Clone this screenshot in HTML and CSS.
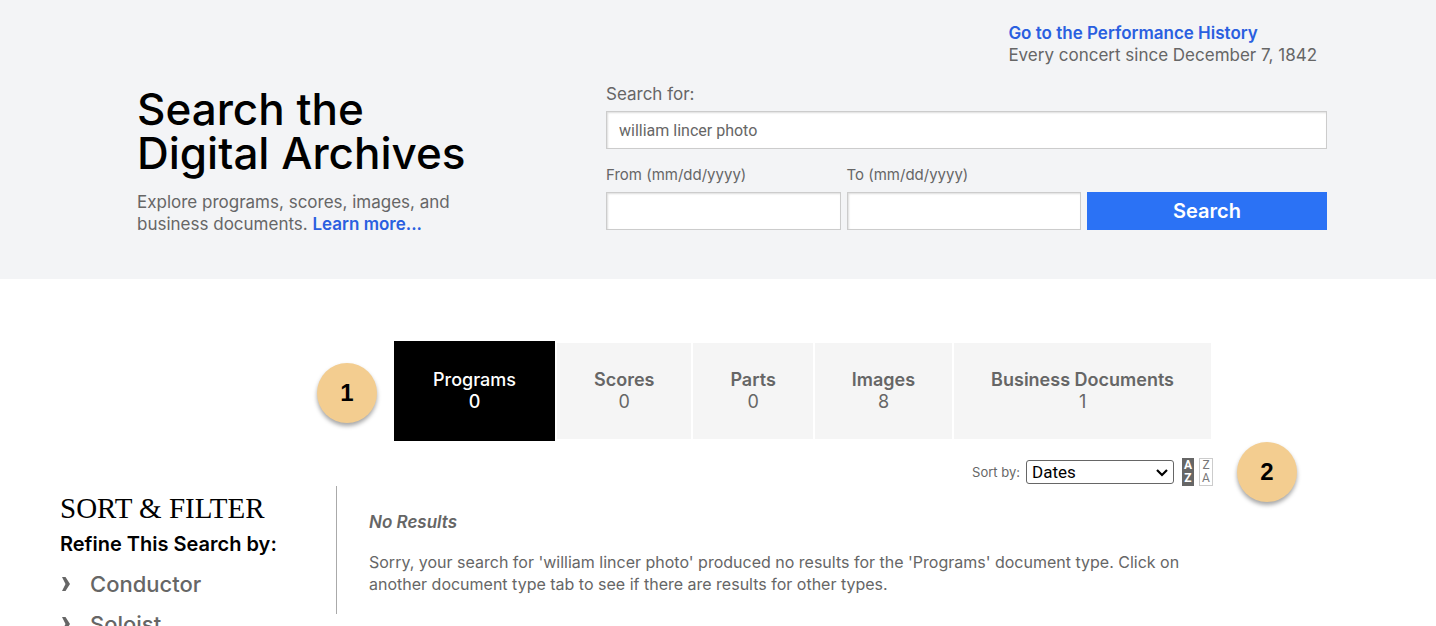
FILE: index.html
```html
<!DOCTYPE html>
<html lang="en">
<head>
    <meta charset="UTF-8">
    <meta name="viewport" content="width=device-width, initial-scale=1.0">
    <link rel="stylesheet" href="styles.css">
    <title>Search the Digital Archives</title>
</head>
<body>
    <header class="search-header">
        <div class="intro">
            <h1>Search the<br>Digital Archives</h1>
            <p>Explore programs, scores, images, and<br>business documents. <a href="#">Learn more...</a></p>
        </div>
        <div class="search-area">
            <div class="history">
                <div class="history-text">
                    <a href="#">Go to the Performance History</a><br>
                    Every concert since December 7, 1842
                </div>
            </div>
            <form class="search-form">
                <div class="field field-wide">
                    <label class="label-large" for="query">Search for:</label>
                    <input type="text" id="query" value="william lincer photo">
                </div>
                <div class="field">
                    <label for="from">From (mm/dd/yyyy)</label>
                    <input type="text" id="from">
                </div>
                <div class="field">
                    <label for="to">To (mm/dd/yyyy)</label>
                    <input type="text" id="to">
                </div>
                <button type="submit" class="search-button">Search</button>
            </form>
        </div>
    </header>

    <main>
        <div class="tabs">
            <span class="badge badge-tabs">1</span>
            <button type="button" class="tab active"><b>Programs</b><span>0</span></button>
            <button type="button" class="tab"><b>Scores</b><span>0</span></button>
            <button type="button" class="tab"><b>Parts</b><span>0</span></button>
            <button type="button" class="tab"><b>Images</b><span>8</span></button>
            <button type="button" class="tab"><b>Business Documents</b><span>1</span></button>
        </div>

        <div class="sort-row">
            <div class="sort">
                <label for="sort">Sort by:</label>
                <div class="select-box">
                    <select id="sort">
                        <option>Dates</option>
                    </select>
                    <svg class="arrow" width="12" height="8" viewBox="0 0 12 8"><path d="M1 1l5 5 5-5" fill="none" stroke="#000" stroke-width="2.200"/></svg>
                </div>
                <button type="button" class="order selected"><span>A</span><span>Z</span></button>
                <button type="button" class="order"><span>Z</span><span>A</span></button>
                <span class="badge badge-sort">2</span>
            </div>
        </div>

        <div class="columns">
            <aside class="sidebar">
                <h2>SORT &amp; FILTER</h2>
                <h3>Refine This Search by:</h3>
                <ul class="filters">
                    <li><a href="#"><svg width="8" height="14" viewBox="0 0 8 14"><path d="M0 0h3.500L8 7l-4.500 7H0l3.500-7z" fill="#666"/></svg>Conductor</a></li>
                    <li><a href="#"><svg width="8" height="14" viewBox="0 0 8 14"><path d="M0 0h3.500L8 7l-4.500 7H0l3.500-7z" fill="#666"/></svg>Soloist</a></li>
                </ul>
            </aside>
            <section class="results">
                <h4>No Results</h4>
                <p>Sorry, your search for 'william lincer photo' produced no results for the 'Programs' document type. Click on another document type tab to see if there are results for other types.</p>
            </section>
        </div>
    </main>
</body>
</html>
```
FILE: styles.css
```css
* {
    box-sizing: border-box;
}

body {
    font-family: Inter, "Liberation Sans", sans-serif;
    font-size: 17px;
    line-height: 22px;
    color: #666;
    background-color: #fff;
    margin: 0;
    height: 100vh;
    overflow: hidden;
}

a {
    color: #2a5fe0;
    font-weight: 600;
    text-decoration: none;
}

h1, h2, h3, h4, p {
    margin: 0;
}

button, input, select {
    font-family: inherit;
}

.search-header {
    display: grid;
    grid-template-columns: 469px 1fr;
    background-color: #f3f4f6;
    padding: 22px 109px 44px 137px;
}

.intro {
    padding-top: 65px;
}

h1 {
    font-size: 44px;
    line-height: 44px;
    font-weight: 500;
    color: #000;
    margin-bottom: 16px;
}

.history {
    display: flex;
    justify-content: flex-end;
    padding-right: 10px;
    margin-bottom: 17px;
}

.search-form {
    display: grid;
    grid-template-columns: 1fr 1fr 240px;
    column-gap: 6px;
    row-gap: 15px;
    align-items: end;
}

.field-wide {
    grid-column: 1 / 4;
}

.field {
    font-size: 15px;
}

.field label {
    display: block;
    margin-bottom: 6px;
}

.field .label-large {
    font-size: 17px;
}

.field input {
    display: block;
    width: 100%;
    height: 38px;
    padding: 0 12px;
    border: 1px solid #ccc;
    box-shadow: inset 1px 1px 2px #ddd;
    background-color: #fff;
    color: #666;
    font-family: Roboto, sans-serif;
    font-size: 16px;
}

.search-button {
    height: 38px;
    border: none;
    background-color: #2b72f5;
    color: #fff;
    font-size: 20px;
    font-weight: 600;
}

.tabs {
    position: relative;
    display: flex;
    align-items: center;
    gap: 2px;
    width: fit-content;
    margin: 62px 0 0 394px;
}

.tab {
    display: flex;
    flex-direction: column;
    align-items: center;
    justify-content: center;
    height: 96px;
    padding: 0 37px;
    border: none;
    background-color: #f5f5f5;
    color: #666;
    font-size: 18px;
    line-height: 22px;
}

.tab b {
    font-weight: 600;
}

.tab.active {
    height: 100px;
    padding: 0 39px;
    background-color: #000;
    color: #fff;
}

.tab.active b,
.tab.active span {
    font-weight: 500;
}

.badge {
    position: absolute;
    display: flex;
    align-items: center;
    justify-content: center;
    width: 60px;
    height: 60px;
    border-radius: 50%;
    background-color: #f3cd90;
    box-shadow: 0 3px 4px rgba(0, 0, 0, 0.35);
    color: #000;
    font-family: "Liberation Sans", sans-serif;
    font-size: 24px;
    font-weight: bold;
}

.badge-tabs {
    top: 22px;
    left: -77px;
}

.badge-sort {
    top: -16px;
    right: -84px;
}

.sort-row {
    display: flex;
    justify-content: flex-end;
    padding-right: 223px;
    margin-top: 17px;
}

.sort {
    position: relative;
    display: flex;
    align-items: center;
    height: 28px;
    font-size: 13px;
}

.select-box {
    position: relative;
    margin: 0 8px 0 6px;
}

.sort select {
    display: block;
    appearance: none;
    width: 148px;
    height: 24px;
    padding: 0 5px;
    border: 1px solid #666;
    border-radius: 3px;
    background-color: #fff;
    color: #000;
    font-family: Roboto, sans-serif;
    font-size: 17px;
}

.arrow {
    position: absolute;
    top: 9px;
    right: 6px;
    pointer-events: none;
}

.order {
    display: flex;
    flex-direction: column;
    align-items: center;
    width: 14px;
    padding: 0;
    border: 1px solid #ccc;
    background-color: #fff;
    color: #777;
    font-family: Roboto, sans-serif;
    font-size: 12px;
    line-height: 13px;
}

.order.selected {
    width: 12px;
    margin-right: 5px;
    border-color: #666;
    background-color: #666;
    color: #fff;
    font-weight: bold;
}

.columns {
    display: grid;
    grid-template-columns: 276px 1fr;
    align-items: start;
    padding: 0 250px 0 60px;
}

.sidebar h2 {
    font-family: "Liberation Serif", serif;
    font-size: 29px;
    line-height: 36px;
    font-weight: normal;
    color: #000;
    margin-top: 4px;
}

.sidebar h3 {
    font-size: 20px;
    line-height: 24px;
    font-weight: 600;
    color: #000;
    margin-top: 6px;
}

.filters {
    list-style: none;
    margin: 14px 0 0;
    padding: 0;
}

.filters li {
    height: 40px;
}

.filters a {
    display: flex;
    align-items: center;
    gap: 20px;
    padding-left: 2px;
    color: #666;
    font-size: 22px;
    line-height: 28px;
    font-weight: 500;
}

.results {
    min-height: 128px;
    padding: 25px 0 0 32px;
    border-left: 1px solid #aaa;
    font-size: 16px;
}

.results h4 {
    font-size: 17px;
    font-style: italic;
    font-weight: 600;
    margin-bottom: 18px;
}
```
